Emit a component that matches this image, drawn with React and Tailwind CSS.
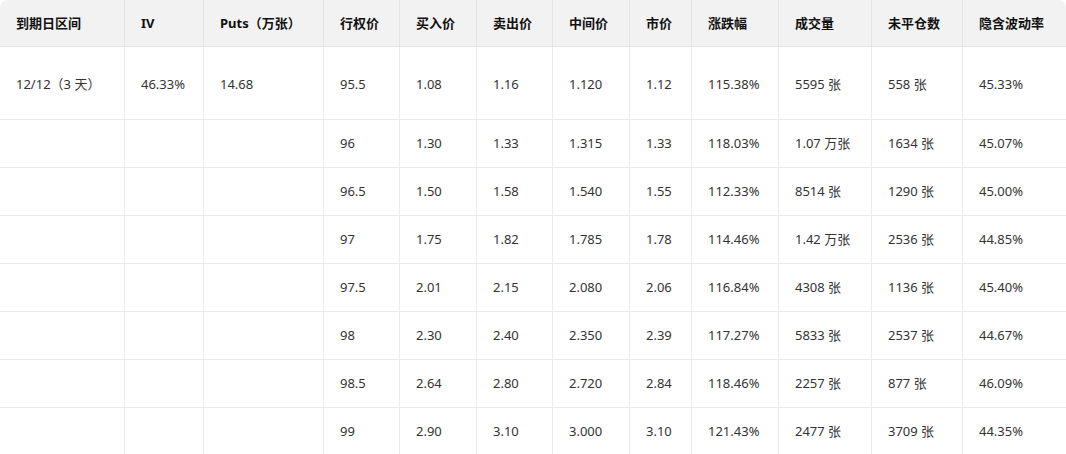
import React from "react";

const headers = ["到期日区间", "IV", "Puts（万张）", "行权价", "买入价", "卖出价", "中间价", "市价", "涨跌幅", "成交量", "未平仓数", "隐含波动率"];

const rows = [
  ["12/12（3 天）", "46.33%", "14.68", "95.5", "1.08", "1.16", "1.120", "1.12", "115.38%", "5595 张", "558 张", "45.33%"],
  ["", "", "", "96", "1.30", "1.33", "1.315", "1.33", "118.03%", "1.07 万张", "1634 张", "45.07%"],
  ["", "", "", "96.5", "1.50", "1.58", "1.540", "1.55", "112.33%", "8514 张", "1290 张", "45.00%"],
  ["", "", "", "97", "1.75", "1.82", "1.785", "1.78", "114.46%", "1.42 万张", "2536 张", "44.85%"],
  ["", "", "", "97.5", "2.01", "2.15", "2.080", "2.06", "116.84%", "4308 张", "1136 张", "45.40%"],
  ["", "", "", "98", "2.30", "2.40", "2.350", "2.39", "117.27%", "5833 张", "2537 张", "44.67%"],
  ["", "", "", "98.5", "2.64", "2.80", "2.720", "2.84", "118.46%", "2257 张", "877 张", "46.09%"],
  ["", "", "", "99", "2.90", "3.10", "3.000", "3.10", "121.43%", "2477 张", "3709 张", "44.35%"],
];

const cols = "grid grid-cols-[125px_79px_120px_76px_77px_76px_77px_62px_87px_93px_91px_1fr]";

export default function App() {
  return (
    <div className="w-[1066px] h-[454px] bg-white overflow-hidden rounded-lg font-['Noto_Sans','Noto_Sans_CJK_SC',sans-serif] text-[13px] text-[#333]">
      <div className={`${cols} h-[47px] bg-[#f2f2f2]`}>
        {headers.map((h, i) => (
          <div key={i} className="flex items-center px-4 pt-[1px] font-bold text-[#111] border-b border-r border-[#e3e3e3] last:border-r-0">
            {h}
          </div>
        ))}
      </div>
      {rows.map((r, ri) => (
        <div key={ri} className={`${cols} ${ri === 0 ? "h-[73px]" : "h-[48px]"}`}>
          {r.map((c, ci) => (
            <div key={ci} className={`flex items-center px-4 border-b border-r border-[#ebebeb] last:border-r-0 ${ri === 0 ? "pt-[3px]" : ""}`}>
              {c}
            </div>
          ))}
        </div>
      ))}
    </div>
  );
}
